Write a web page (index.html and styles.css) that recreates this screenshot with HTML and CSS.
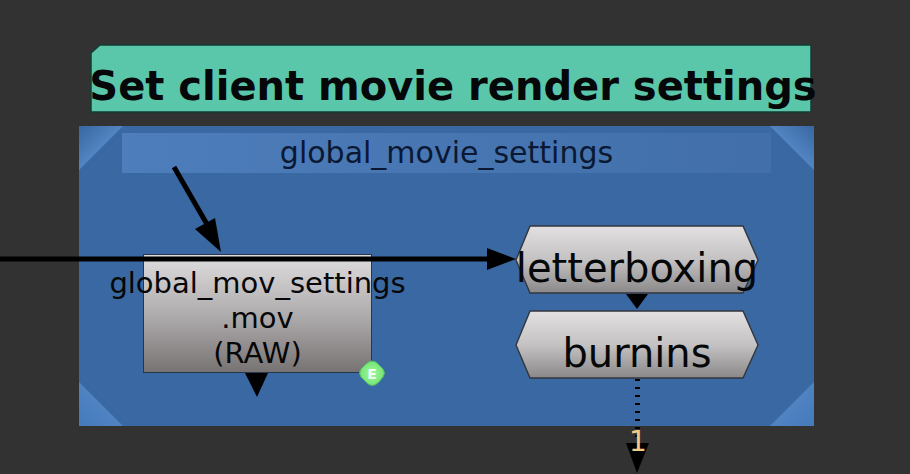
FILE: index.html
```html
<!DOCTYPE html>
<html lang="en">
<head>
<meta charset="utf-8">
<title>Node graph</title>
<link rel="stylesheet" href="styles.css">
</head>
<body>
<main class="graph">
  <section class="backdrop">
    <svg class="fold fold-tl" viewBox="0 0 44 44" aria-hidden="true"><path d="M0 0H44L0 44Z" fill="url(#foldFill)"/></svg>
    <svg class="fold fold-tr" viewBox="0 0 44 44" aria-hidden="true"><path d="M0 0H44L0 44Z" fill="url(#foldFill)"/></svg>
    <svg class="fold fold-bl" viewBox="0 0 44 44" aria-hidden="true"><path d="M0 0H44L0 44Z" fill="url(#foldFillLight)"/></svg>
    <svg class="fold fold-br" viewBox="0 0 44 44" aria-hidden="true"><path d="M0 0H44L0 44Z" fill="url(#foldFillLight)"/></svg>
    <h2 class="backdrop-label">global_movie_settings</h2>
  </section>

  <div class="node note">
    <svg class="shape" viewBox="0 0 722 69" preserveAspectRatio="none" aria-hidden="true"><path d="M1 9L10 1H721V68H1Z" fill="#5bc7aa" stroke="#143c35" stroke-width="1.500"/></svg>
    <h1 class="label">Set client movie render settings</h1>
  </div>

  <div class="node write">
    <p class="label">global_mov_settings<br>.mov<br>(RAW)</p>
  </div>

  <div class="node group letterboxing">
    <svg class="shape" viewBox="0 0 244 69" aria-hidden="true"><path d="M15 1H228L243 35L228 68H15L1 35Z" fill="url(#groupFill)" stroke="#33363c" stroke-width="1.4"/></svg>
    <p class="label">letterboxing</p>
  </div>

  <div class="node group burnins">
    <svg class="shape" viewBox="0 0 244 69" aria-hidden="true"><path d="M15 1H228L243 35L228 68H15L1 35Z" fill="url(#groupFill)" stroke="#33363c" stroke-width="1.4"/></svg>
    <p class="label">burnins</p>
  </div>

  <svg class="edges" width="910" height="474" viewBox="0 0 910 474" aria-hidden="true">
    <defs>
      <linearGradient id="groupFill" x1="0" y1="0" x2="0" y2="1">
        <stop offset="0" stop-color="#e2e0e1"/>
        <stop offset=".5" stop-color="#c4c2c3"/>
        <stop offset="1" stop-color="#8b8889"/>
      </linearGradient>
      <linearGradient id="foldFill" x1="0" y1="0" x2=".5" y2=".5">
        <stop offset="0" stop-color="#3867a2"/>
        <stop offset="1" stop-color="#5285c2"/>
      </linearGradient>
      <linearGradient id="foldFillLight" x1="0" y1="0" x2=".5" y2=".5">
        <stop offset="0" stop-color="#457abb"/>
        <stop offset="1" stop-color="#4f83c2"/>
      </linearGradient>
      <radialGradient id="badgeFill">
        <stop offset="0" stop-color="#a5f79c"/>
        <stop offset="1" stop-color="#72e573"/>
      </radialGradient>
    </defs>
    <g stroke="#000" stroke-width="5" fill="none">
      <path d="M174 167L208 226"/>
      <path d="M0 259H490"/>
      <path d="M637.500 379V446" stroke-dasharray="2 6"/>
    </g>
    <path d="M221 252L195 229L215 218Z"/>
    <path d="M516 259L487 248V270Z"/>
    <path d="M245 373H268L257 397Z"/>
    <path d="M626 294H648L637 309Z"/>
    <path d="M626 443H649L637 473Z"/>
    <path d="M372 361Q376 361 379 365L383 369Q386 373 383 377L379 382Q372 389 366 382L361 377Q358 373 361 369L366 364Q369 361 372 361Z" fill="url(#badgeFill)" stroke="#4fb86d"/>
  </svg>
  <span class="badge">E</span>
  <span class="input-number">1</span>
</main>
</body>
</html>
```
FILE: styles.css
```css
* {
  box-sizing: border-box;
}

body {
  margin: 0;
  background: #333233;
  color: #060708;
  font-family: "DejaVu Sans", Verdana, sans-serif;
}

h1,
h2,
p {
  margin: 0;
  font-weight: normal;
}

.graph {
  position: relative;
  min-height: 100vh;
  overflow: hidden;
}

.backdrop {
  position: absolute;
  left: 79px;
  top: 126px;
  width: 735px;
  height: 300px;
  padding: 7px 43px;
  background: #3a68a2;
}

.backdrop-label {
  background: linear-gradient(to right, #4d7dbb, #426fa9);
  color: #0a1833;
  font-size: 30px;
  line-height: 40px;
  text-align: center;
  white-space: nowrap;
}

.fold {
  position: absolute;
  width: 44px;
  height: 44px;
}

.fold-tl {
  left: 0;
  top: 0;
}

.fold-tr {
  right: 0;
  top: 0;
  transform: scaleX(-1);
}

.fold-bl {
  left: 0;
  bottom: 0;
  transform: scaleY(-1);
}

.fold-br {
  right: 0;
  bottom: 0;
  transform: scale(-1);
}

.node {
  position: absolute;
  display: flex;
  align-items: center;
  justify-content: center;
}

.shape {
  position: absolute;
  inset: 0;
  width: 100%;
  height: 100%;
}

.label {
  position: relative;
  text-align: center;
  white-space: nowrap;
}

.note {
  left: 90px;
  top: 44px;
  width: 722px;
  height: 69px;
  padding: 14px 0 0 4px;
}

.note .label {
  font-size: 40px;
  font-weight: bold;
  line-height: 48px;
}

.write {
  left: 143px;
  top: 254px;
  width: 229px;
  height: 119px;
  padding-top: 10px;
  border: 1px solid #26364c;
  background: linear-gradient(#dfddde, #aba8a9 55%, #787373);
}

.write .label {
  font-size: 29px;
  line-height: 35px;
}

.group {
  left: 515px;
  width: 244px;
  height: 69px;
  padding-top: 16px;
}

.group .label {
  font-size: 40px;
  line-height: 48px;
}

.letterboxing {
  top: 225px;
}

.burnins {
  top: 310px;
}

.edges {
  position: absolute;
  left: 0;
  top: 0;
}

.badge {
  position: absolute;
  left: 362px;
  top: 364px;
  width: 20px;
  color: #f0fff0;
  font-size: 14px;
  font-weight: bold;
  line-height: 20px;
  text-align: center;
}

.input-number {
  position: absolute;
  left: 624px;
  top: 426px;
  width: 28px;
  color: #f5cb88;
  font-size: 28px;
  line-height: 32px;
  text-align: center;
}
```
